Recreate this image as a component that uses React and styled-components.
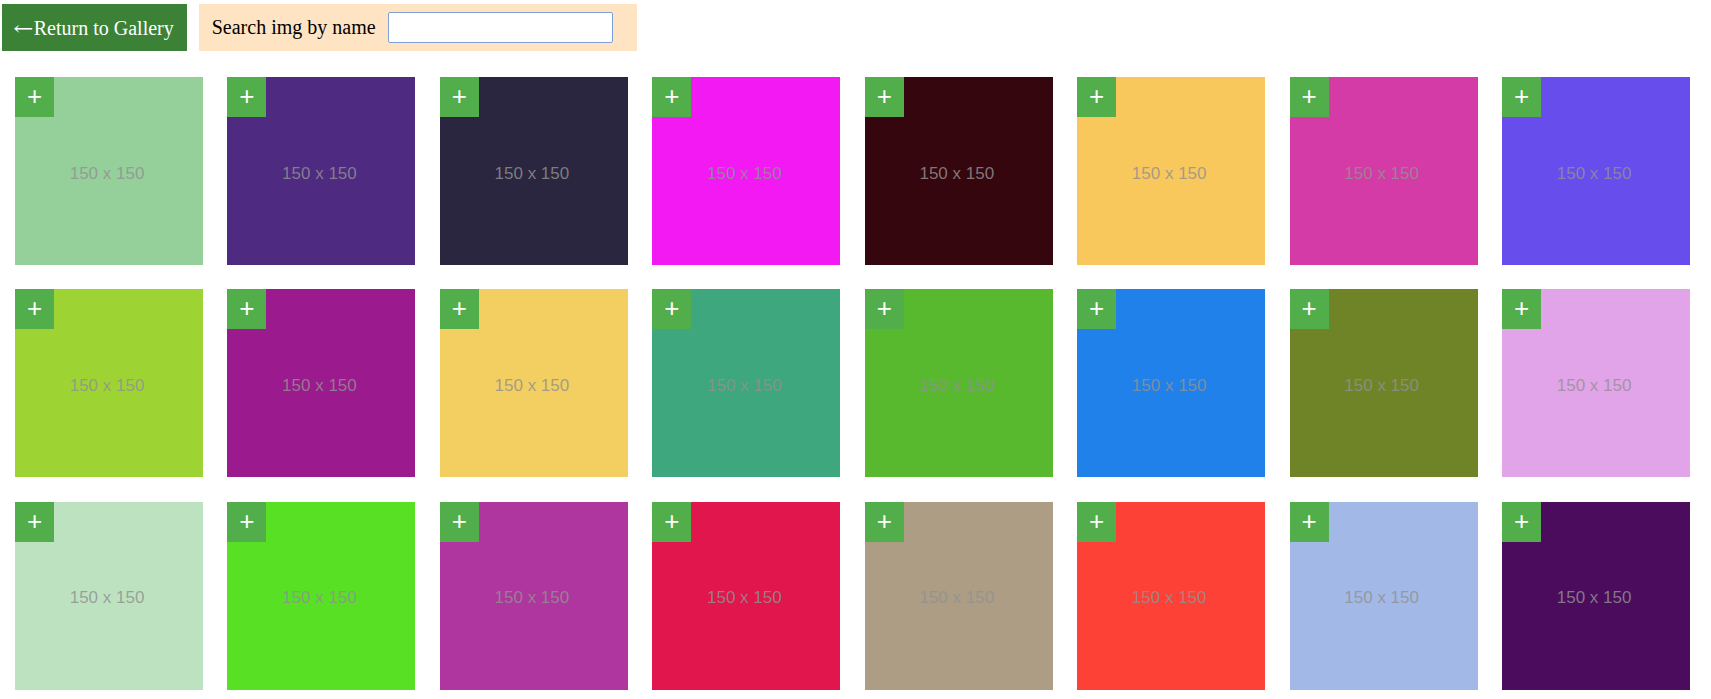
import React from "react";
import styled, { createGlobalStyle } from "styled-components";

const GlobalStyle = createGlobalStyle`
  body {
    margin: 0;
    background: #fff;
    font-family: "Liberation Serif", "Times New Roman", serif;
  }
`;

const tiles = [
  "#95cf9a", "#4e2a80", "#2b2640", "#f219f3", "#36060f", "#f8c85c", "#d43ba7", "#684ded",
  "#9dd433", "#9b1a8e", "#f3cf62", "#3ea77e", "#58b92e", "#2181ea", "#6f8426", "#e2a4e8",
  "#bde2bf", "#58e024", "#b0369f", "#e0164c", "#ac9d84", "#fe4136", "#a2b8e7", "#4b0c5d",
];

const Page = styled.div`
  display: flex;
  flex-direction: column;
  gap: 26px;
  padding-top: 4px;
`;

const Toolbar = styled.div`
  display: flex;
  align-items: stretch;
  gap: 12px;
  padding-left: 2px;
  height: 47px;
`;

const BackButton = styled.button`
  background-color: #3b8236;
  color: #fff;
  border: none;
  padding: 0 13px 0 11px;
  font-family: "Liberation Serif", "Times New Roman", serif;
  font-size: 20px;
  cursor: pointer;
`;

const Arrow = styled.span`
  font-family: "DejaVu Serif", serif;
  font-size: 20px;
  display: inline-block;
  transform: scaleX(1.2);
  margin: 0 2px 0 2px;
`;

const SearchBox = styled.label`
  display: flex;
  align-items: center;
  gap: 12px;
  background-color: #ffe4c4;
  padding: 0 24px 0 13px;
  font-size: 20px;
  color: #000;
`;

const SearchInput = styled.input`
  width: 225px;
  height: 31px;
  box-sizing: border-box;
  border: 1px solid #7f9fd8;
  border-radius: 2px;
  background: #fff;
  outline: none;
`;

const Grid = styled.div`
  display: grid;
  grid-template-columns: repeat(8, 1fr);
  gap: 24.4px;
  padding: 0 21px 0 15px;
`;

const Tile = styled.div`
  position: relative;
  aspect-ratio: 1;
  background-color: ${(p) => p.$color};
  display: flex;
  align-items: center;
  justify-content: center;
`;

const Placeholder = styled.span`
  font-family: "Liberation Sans", Arial, sans-serif;
  font-size: 17px;
  color: rgba(145, 145, 145, 0.82);
  padding: 5px 4px 0 0;
`;

const AddBadge = styled.button`
  position: absolute;
  top: 0;
  left: 0;
  width: 39px;
  height: 40px;
  border: none;
  padding: 0 0 2px;
  background-color: #52ae4a;
  color: #fff;
  font-family: "Liberation Sans", Arial, sans-serif;
  font-size: 26px;
  line-height: 1;
  display: flex;
  align-items: center;
  justify-content: center;
  cursor: pointer;
`;

export default function App() {
  return (
    <Page>
      <GlobalStyle />
      <Toolbar>
        <BackButton>
          <Arrow>←</Arrow>Return to Gallery
        </BackButton>
        <SearchBox>
          Search img by name
          <SearchInput type="text" />
        </SearchBox>
      </Toolbar>
      <Grid>
        {tiles.map((c, i) => (
          <Tile key={i} $color={c}>
            <AddBadge>+</AddBadge>
            <Placeholder>150 x 150</Placeholder>
          </Tile>
        ))}
      </Grid>
    </Page>
  );
}
